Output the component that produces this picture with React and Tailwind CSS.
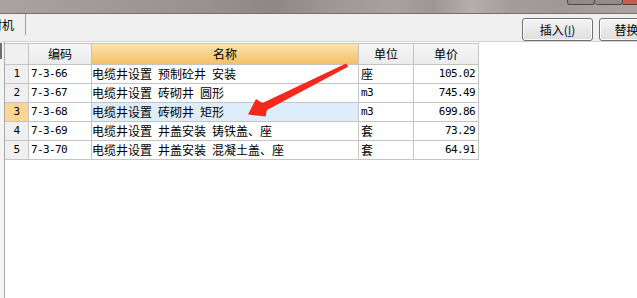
import React from "react";

const rows = [
  { n: "1", code: "7-3-66", name: "电缆井设置 预制砼井 安装", unit: "座", ascii: false, price: "105.02" },
  { n: "2", code: "7-3-67", name: "电缆井设置 砖砌井 圆形", unit: "m3", ascii: true, price: "745.49" },
  { n: "3", code: "7-3-68", name: "电缆井设置 砖砌井 矩形", unit: "m3", ascii: true, price: "699.86", sel: true },
  { n: "4", code: "7-3-69", name: "电缆井设置 井盖安装 铸铁盖、座", unit: "套", ascii: false, price: "73.29" },
  { n: "5", code: "7-3-70", name: "电缆井设置 井盖安装 混凝土盖、座", unit: "套", ascii: false, price: "64.91" },
];

const mono = "font-['DejaVu_Sans_Mono',monospace] text-[11px] tracking-[-0.6px]";
const cell = "border-r border-b border-[#c4c4c4] h-[19px] flex items-center";

function Button({ label, keyChar }) {
  return (
    <div className="w-[71px] h-[23px] shrink-0 rounded-[3px] border border-[#707070] bg-[linear-gradient(#f5f5f5,#e9e9e9_50%,#dedede)] shadow-[inset_0_0_0_1px_#fcfcfc] flex items-center justify-center text-[12px] leading-none">
      <span>{label}(</span>
      <span className="underline text-[#1a3a8a]">{keyChar}</span>
      <span>)</span>
    </div>
  );
}

export default function App() {
  return (
    <div className="relative w-[637px] h-[298px] overflow-hidden bg-[#f0f0f0] text-black text-[12px] font-['Noto_Sans_CJK_SC','Noto_Sans_CJK_JP',sans-serif]">
      {/* title bar */}
      <div className="h-[14px] border-b border-[#75706e] bg-[linear-gradient(90deg,#a8a2a0_0%,#a19b98_15%,#98928f_32%,#8e8885_43%,#9d9795_52%,#a7a19f_62%,#9c9694_68%,#b4afad_74%,#a39e9c_80%,#9e9997_88%,#a9a4a2_100%)] flex justify-end items-start">
        <div className="flex">
          <div className="w-[28px] h-[5px] border-x border-b border-[#4d4b4a] rounded-b-[3px] bg-[#8f8c8b]" />
          <div className="w-[28px] h-[5px] border-r border-b border-[#4d4b4a] rounded-b-[3px] bg-[#8f8c8b]" />
          <div className="w-[14px] h-[5px] border-b border-[#5a3a34] bg-[#c0604f]" />
        </div>
      </div>

      {/* toolbar */}
      <div className="h-[28px] border-b border-[#d2d2d2] flex items-start justify-between">
        <div className="flex items-start h-full">
          <div className="ml-[-22px] mt-[2px] text-[12px] leading-[18px] whitespace-nowrap">人材机</div>
          <div className="ml-[11px] w-px h-[21px] bg-[#a0a0a0]" />
        </div>
        <div className="flex gap-[6px] mt-[4px] mr-[-33px]">
          <Button label="插入" keyChar="I" />
          <Button label="替换" keyChar="R" />
        </div>
      </div>

      {/* main area */}
      <div className="flex h-[256px]">
        <div className="w-[4px] bg-[#f4f4f4] pt-[1px]">
          <div className="w-[2px] h-[16px] bg-[#6e6e6e]" />
        </div>
        <div className="flex-1 bg-white border-l border-[#a9a9a9] pt-[1px]">
          <div className="grid grid-cols-[24px_63px_267px_55px_65px] w-[474px] border-t border-[#c4c4c4]">
            {/* header */}
            <div className="border-r border-b border-[#c4c4c4] h-[21px] bg-[#f0f0f0]" />
            <div className="border-r border-b border-[#c4c4c4] h-[21px] bg-[linear-gradient(#f6f6f6,#ececec)] flex items-center justify-center">编码</div>
            <div className="border-r border-b border-[#c4c4c4] h-[21px] bg-[linear-gradient(#fde4b1,#f6cd83_60%,#f3c168)] flex items-center justify-center">名称</div>
            <div className="border-r border-b border-[#c4c4c4] h-[21px] bg-[linear-gradient(#f6f6f6,#ececec)] flex items-center justify-center">单位</div>
            <div className="border-r border-b border-[#c4c4c4] h-[21px] bg-[linear-gradient(#f6f6f6,#ececec)] flex items-center justify-center">单价</div>
            {rows.map((r) => (
              <React.Fragment key={r.n}>
                <div className={`${cell} justify-center ${mono} ${r.sel ? "bg-[#fdd592]" : "bg-[#f0f0f0]"}`}>{r.n}</div>
                <div className={`${cell} pl-[2px] ${mono}`}>{r.code}</div>
                <div className={`${cell} pl-[0px] whitespace-nowrap [word-spacing:3.3px] ${r.sel ? "bg-[#ddedfb]" : ""}`}>{r.name}</div>
                <div className={`${cell} pl-[2px] ${r.ascii ? mono : ""}`}>{r.unit}</div>
                <div className={`${cell} justify-end pr-[3px] ${mono}`}>{r.price}</div>
              </React.Fragment>
            ))}
          </div>
        </div>
      </div>

      {/* red annotation arrow */}
      <svg className="absolute inset-0 pointer-events-none" width="637" height="298" viewBox="0 0 637 298">
        <polygon
          points="248,114.5 256,99 262.5,103 346,63.5 348.5,66.5 267,110 265.5,116.5"
          fill="#f5281c"
        />
      </svg>
    </div>
  );
}
